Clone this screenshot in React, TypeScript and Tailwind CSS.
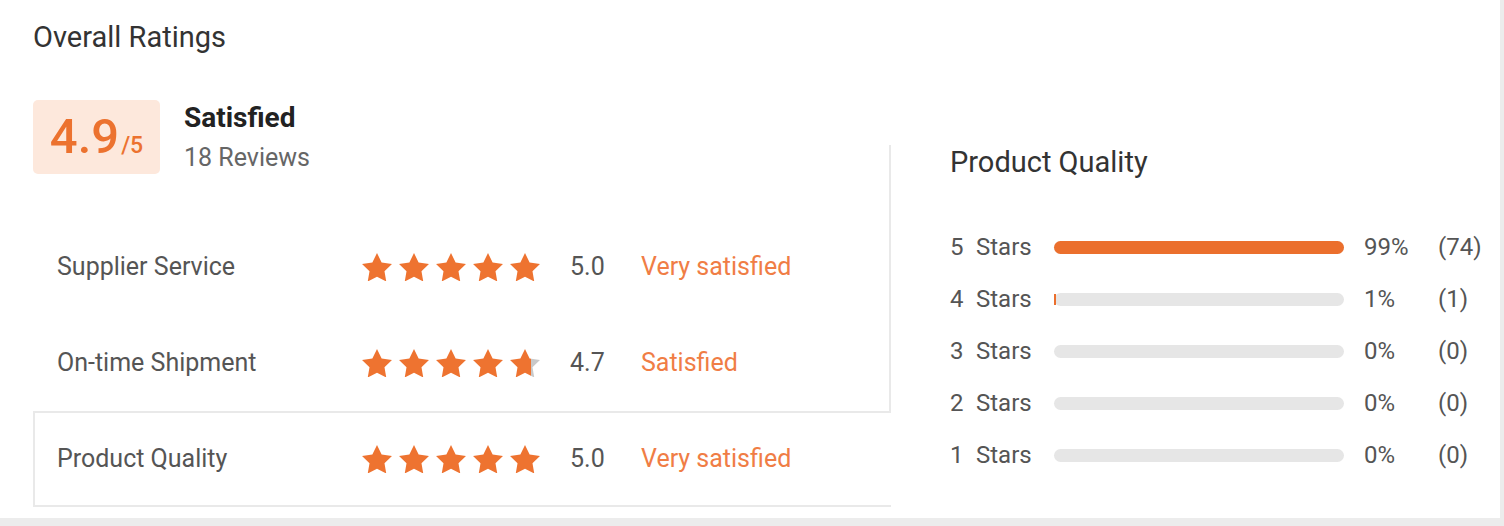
import React from 'react';

const STAR_POINTS =
  '12,2 15.09,8.26 22,9.27 17,14.14 18.18,21.02 12,17.77 5.82,21.02 7,14.14 2,9.27 8.91,8.26';

const Star: React.FC<{ fill: number; id: string }> = ({ fill, id }) => (
  <svg viewBox="2 2 20 19.02" className="w-[30px] h-[28.5px]">
    <defs>
      <linearGradient id={id}>
        <stop offset={fill} stopColor="#ee7330" />
        <stop offset={fill} stopColor="#c9c9c9" />
      </linearGradient>
    </defs>
    <polygon points={STAR_POINTS} fill={`url(#${id})`} />
  </svg>
);

const Stars: React.FC<{ value: number; name: string }> = ({ value, name }) => (
  <div className="flex items-center gap-[7px]">
    {[0, 1, 2, 3, 4].map((i) => (
      <Star key={i} id={`${name}-${i}`} fill={Math.max(0, Math.min(1, value - i))} />
    ))}
  </div>
);

const ratings = [
  { label: 'Supplier Service', value: 5, score: '5.0', verdict: 'Very satisfied', active: false },
  { label: 'On-time Shipment', value: 4.7, score: '4.7', verdict: 'Satisfied', active: false },
  { label: 'Product Quality', value: 5, score: '5.0', verdict: 'Very satisfied', active: true },
];

const breakdown = [
  { stars: 5, pct: 99, count: 74 },
  { stars: 4, pct: 1, count: 1 },
  { stars: 3, pct: 0, count: 0 },
  { stars: 2, pct: 0, count: 0 },
  { stars: 1, pct: 0, count: 0 },
];

const App: React.FC = () => {
  return (
    <div className="min-h-screen bg-[#ececec] font-['Roboto',sans-serif]">
      <div className="w-[1500px] h-[518px] bg-white">
        {/* Header */}
        <div className="pt-[19px] pl-[33px] text-[29px] leading-[36px] text-[#333]">
          Overall Ratings
        </div>

        <div className="mt-[45px] flex">
          {/* Left side */}
          <div className="ml-[33px] w-[856px]">
            <div className="flex items-start">
              <div className="w-[127px] h-[74px] rounded-[5px] bg-[#fde8dc] flex items-center justify-center">
                <div className="flex items-baseline font-medium text-[#ec722f]">
                  <span className="text-[49px] leading-[48px]">4.9</span>
                  <span className="text-[23px] leading-[22px] ml-[2px]">/5</span>
                </div>
              </div>
              <div className="ml-[24px] mt-[1px]">
                <div className="text-[28px] leading-[34px] font-bold text-[#222]">Satisfied</div>
                <div className="mt-[7px] text-[25px] leading-[32px] text-[#666]">18 Reviews</div>
              </div>
            </div>

            <div className="mt-[45px]">
              {ratings.map((r) => (
                <div
                  key={r.label}
                  className={`h-[96px] flex items-center pl-[22px] border-y-2 border-l-2 ${
                    r.active
                      ? 'border-[#e9e9e9] bg-white relative z-10 w-[calc(100%+2px)]'
                      : 'border-transparent'
                  }`}
                >
                  <span className="w-[305px] text-[25px] text-[#555]">{r.label}</span>
                  <Stars value={r.value} name={r.label.replace(/\s/g, '')} />
                  <span className="ml-[30px] w-[71px] text-[25px] text-[#555]">{r.score}</span>
                  <span className="text-[25px] text-[#f07d45]">{r.verdict}</span>
                </div>
              ))}
            </div>
          </div>

          {/* Right side */}
          <div className="mt-[45px] h-[362px] border-l-2 border-[#e9e9e9] pl-[59px]">
            <div className="text-[29px] leading-[34px] text-[#333]">Product Quality</div>
            <div className="mt-[42px]">
              {breakdown.map((b) => (
                <div key={b.stars} className="h-[52px] flex items-center text-[24px] text-[#555]">
                  <span className="w-[26px]">{b.stars}</span>
                  <span className="w-[78px]">Stars</span>
                  <div className="w-[290px] h-[13px] rounded-full bg-[#e6e6e6] flex items-center">
                    {b.pct > 50 && (
                      <div
                        className="h-full rounded-full bg-[#eb6f2d]"
                        style={{ width: `${b.pct + 1}%` }}
                      />
                    )}
                    {b.pct > 0 && b.pct <= 50 && <div className="w-[2px] h-[11px] bg-[#eb6f2d]" />}
                  </div>
                  <span className="ml-[20px] w-[74px]">{b.pct}%</span>
                  <span>({b.count})</span>
                </div>
              ))}
            </div>
          </div>
        </div>
      </div>
    </div>
  );
};

export default App;
